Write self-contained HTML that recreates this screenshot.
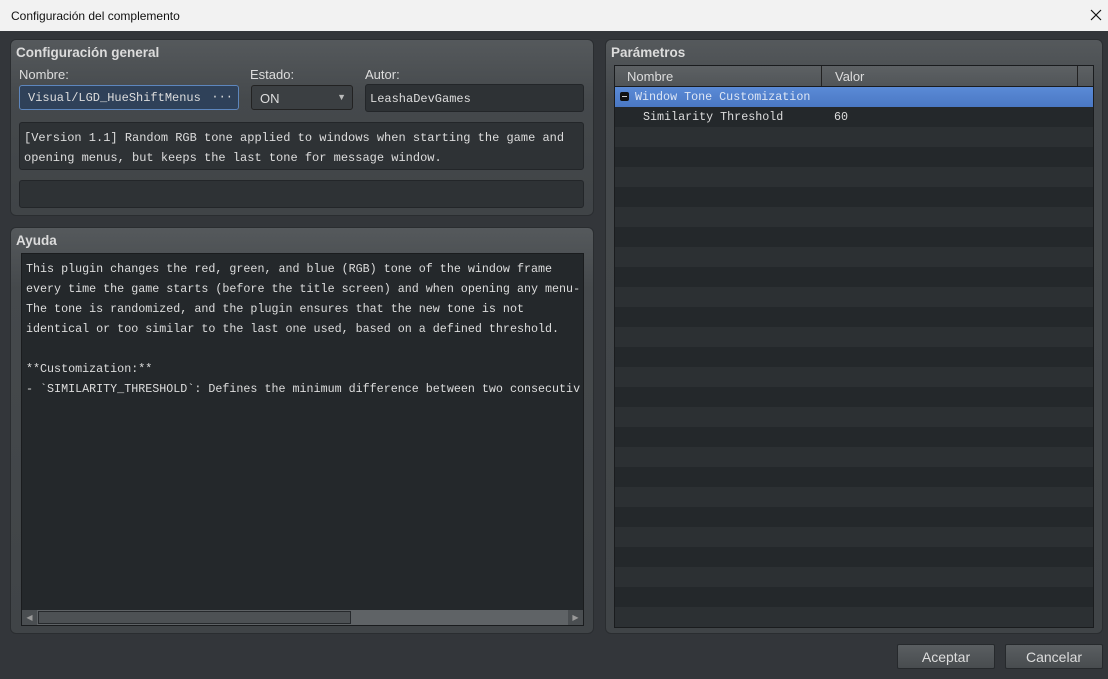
<!DOCTYPE html>
<html><head><meta charset="utf-8"><style>
*{margin:0;padding:0;box-sizing:border-box}
body{width:1108px;height:679px;background:#33363a;font-family:"Liberation Sans",sans-serif;position:relative;overflow:hidden}
.abs{position:absolute}
.title{left:0;top:0;width:1108px;height:31px;background:#f2f2f2;font-size:12px;color:#111;padding:9px 0 0 11px}
.grp{border:1px solid #2a2d30;border-radius:6px;background:linear-gradient(#55595c,#45494c 60px,#404447)}
.gt{font-weight:bold;color:#dcdcdc;font-size:13.5px}
.lbl{color:#ddd;font-size:13px}
.fld{background:#2e3235;border:1px solid #232629;border-radius:3px;color:#ddd;font-family:"Liberation Mono",monospace;font-size:12px}
.mono{font-family:"Liberation Mono",monospace;font-size:11.7px;color:#ddd}
.btn{background:linear-gradient(#5a5e61,#484c4f);border:1px solid #26292c;border-radius:2px;color:#ddd;font-size:14px;text-align:center;line-height:24px}
</style></head><body>
<div class="abs title">Configuración del complemento</div>
<svg class="abs" style="left:1090px;top:9px" width="12" height="12"><path d="M1 1L11 11M11 1L1 11" stroke="#111" stroke-width="1.2"/></svg>

<div class="abs grp" style="left:10px;top:39px;width:584px;height:177px"></div>
<div class="abs gt" style="left:16px;top:45px">Configuración general</div>
<div class="abs lbl" style="left:19px;top:67px">Nombre:</div>
<div class="abs lbl" style="left:250px;top:67px">Estado:</div>
<div class="abs lbl" style="left:365px;top:67px">Autor:</div>
<div class="abs fld" style="left:19px;top:85px;width:220px;height:25px;background:#2f4159;border:1px solid #5d86bd;padding:5px 0 0 8px">Visual/LGD_HueShiftMenus<span style="position:absolute;right:5px;top:4px">···</span></div>
<div class="abs fld" style="left:251px;top:85px;width:102px;height:25px;background:#3b3f42;border:1px solid #222;padding:5px 0 0 8px;font-family:'Liberation Sans',sans-serif;font-size:13px">ON<span style="position:absolute;right:6px;top:6px;font-size:9px;color:#bbb">▼</span></div>
<div class="abs fld" style="left:365px;top:84px;width:219px;height:28px;padding:7px 0 0 4px">LeashaDevGames</div>
<div class="abs fld" style="left:19px;top:122px;width:565px;height:48px;padding:5px 0 0 4px;line-height:20px">[Version 1.1] Random RGB tone applied to windows when starting the game and<br>opening menus, but keeps the last tone for message window.</div>
<div class="abs fld" style="left:19px;top:180px;width:565px;height:28px"></div>

<div class="abs grp" style="left:10px;top:227px;width:584px;height:407px"></div>
<div class="abs gt" style="left:16px;top:233px">Ayuda</div>
<div class="abs" style="left:21px;top:253px;width:563px;height:373px;background:#24282b;border:1px solid #1a1c1e"></div>
<div class="abs mono" style="left:26px;top:259px;line-height:20px;white-space:pre;width:555px;overflow:hidden">This plugin changes the red, green, and blue (RGB) tone of the window frame
every time the game starts (before the title screen) and when opening any menu-
The tone is randomized, and the plugin ensures that the new tone is not
identical or too similar to the last one used, based on a defined threshold.

**Customization:**
- `SIMILARITY_THRESHOLD`: Defines the minimum difference between two consecutiv</div>
<div class="abs" style="left:22px;top:610px;width:561px;height:15px;background:#5f6366"></div>
<div class="abs" style="left:22px;top:610px;width:15px;height:15px;background:#4a4e51;color:#999;font-size:8px;text-align:center;line-height:15px">◀</div>
<div class="abs" style="left:568px;top:610px;width:15px;height:15px;background:#4a4e51;color:#999;font-size:8px;text-align:center;line-height:15px">▶</div>
<div class="abs" style="left:38px;top:611px;width:313px;height:13px;background:#4d5154;border:1px solid #26292c"></div>

<div class="abs grp" style="left:605px;top:39px;width:498px;height:595px"></div>
<div class="abs gt" style="left:611px;top:45px">Parámetros</div>
<div class="abs" style="left:614px;top:65px;width:480px;height:563px;border:1px solid #1a1c1e;background:repeating-linear-gradient(#2c3033 0 20px,#24282b 20px 40px) 0 21px/100% 100% no-repeat,#24282b;overflow:hidden">
 <div style="height:21px;background:linear-gradient(#5d6164,#515558);border-bottom:1px solid #1a1c1e;position:relative;color:#ddd;font-size:13px">
  <span style="position:absolute;left:12px;top:3px">Nombre</span>
  <span style="position:absolute;left:206px;top:0;height:20px;border-left:1px solid #222"></span>
  <span style="position:absolute;left:220px;top:3px">Valor</span>
  <span style="position:absolute;left:462px;top:0;height:20px;border-left:1px solid #222"></span>
 </div>
 <div style="height:20px;background:linear-gradient(#5a8ad6,#4a78c4);position:relative" class="mono">
  <span style="position:absolute;left:5px;top:5px;width:9px;height:9px;background:#111;border-radius:2px"><span style="position:absolute;left:2px;top:4px;width:5px;height:1px;background:#ccc"></span></span>
  <span style="position:absolute;left:20px;top:3px;color:#dde6f5">Window Tone Customization</span>
 </div>
 <div style="height:20px;position:relative" class="mono">
  <span style="position:absolute;left:28px;top:3px">Similarity Threshold</span>
  <span style="position:absolute;left:219px;top:3px">60</span>
 </div>
</div>

<div class="abs btn" style="left:897px;top:644px;width:98px;height:25px">Aceptar</div>
<div class="abs btn" style="left:1005px;top:644px;width:98px;height:25px">Cancelar</div>
</body></html>
